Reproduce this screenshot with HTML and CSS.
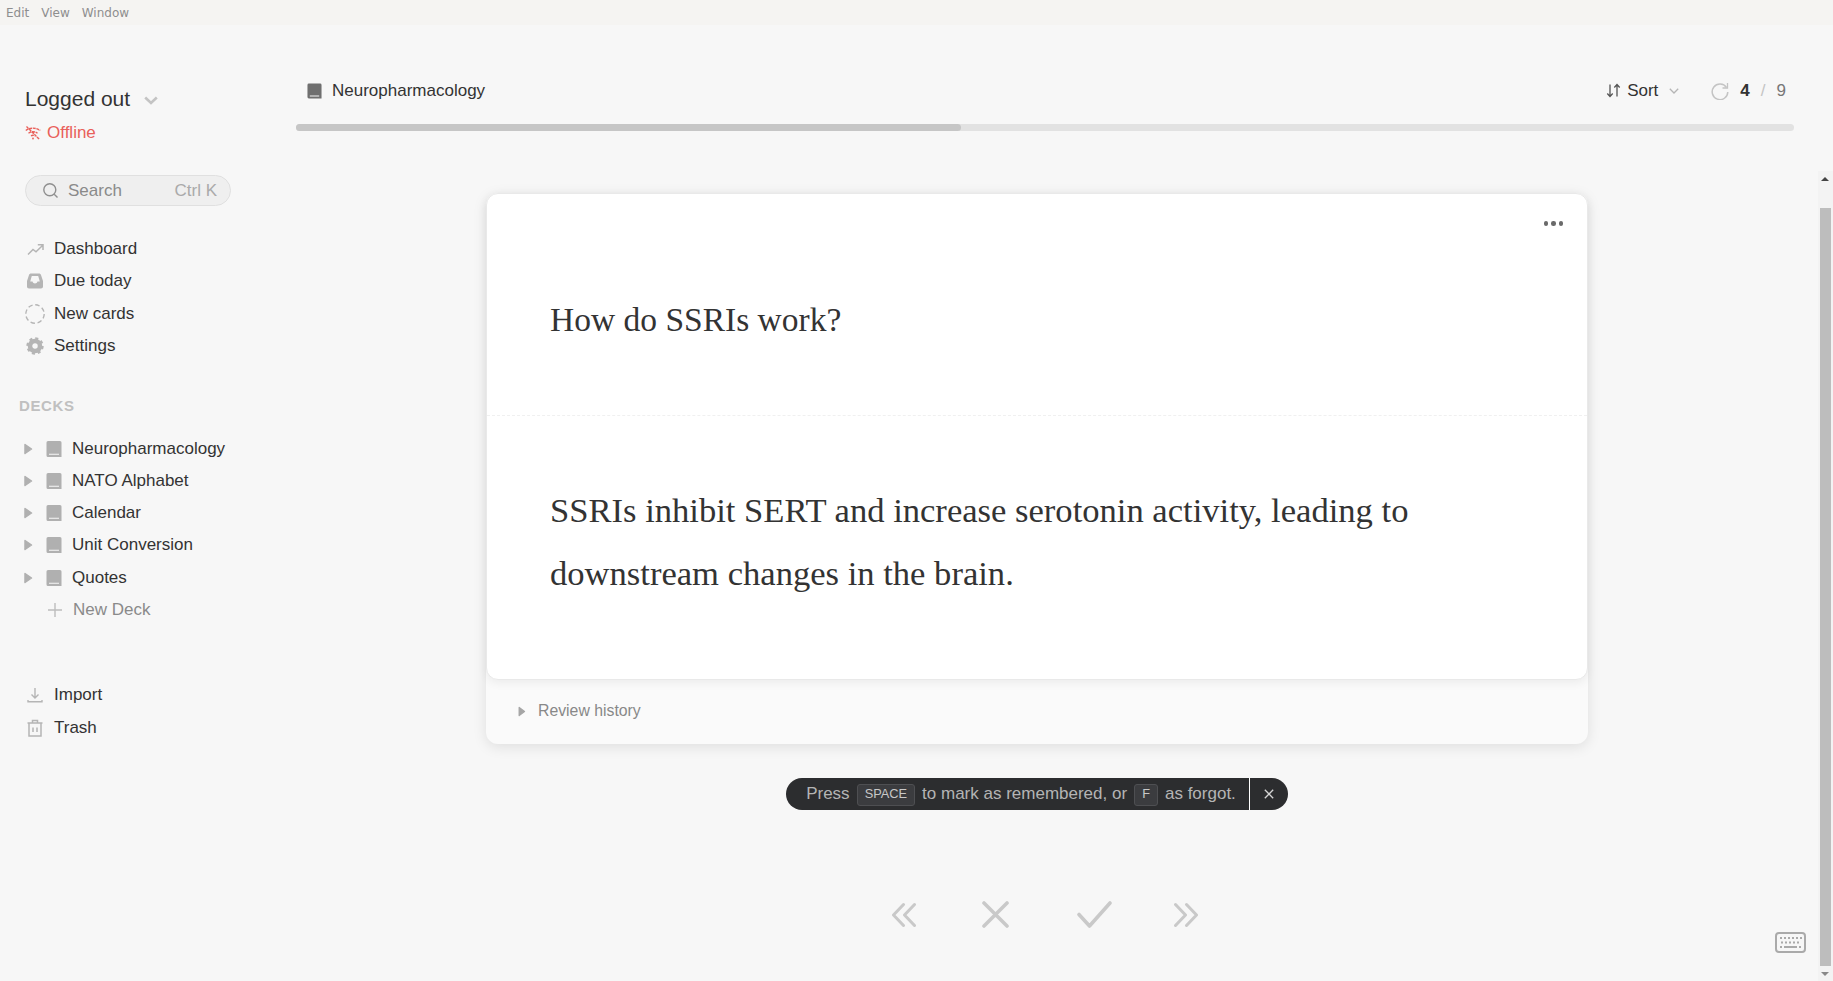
FILE: index.html
```html
<!DOCTYPE html>
<html lang="en">
<head>
    <meta charset="UTF-8">
    <title>Mochi</title>
    <link rel="stylesheet" href="styles.css">
</head>
<body>
    <div class="menubar">
        <span>Edit</span>
        <span>View</span>
        <span>Window</span>
    </div>

    <div class="app">
        <aside class="sidebar">
            <div class="account">Logged out
                <svg class="account-caret" width="14" height="9" viewBox="0 0 14 9"><path d="M1.200 1.500 7 7l5.800-5.500" fill="none" stroke="#c4c4c4" stroke-width="2.600"/></svg>
            </div>
            <div class="offline">
                <svg width="16" height="16" viewBox="0 0 16 16" fill="none" stroke="#e9605a" stroke-width="1.400" stroke-dasharray="3 .7"><path d="M.8 5.500C4.500 2.500 10.500 2.300 15.200 5.500M3.500 8.200C6 6.400 9.500 6.100 12.500 8.200M6 10.800c1.300-.8 2.700-.8 4 0M1.500 1.500l13 13"/><circle cx="8" cy="13.500" r=".9" fill="#e9605a" stroke="none"/></svg>
                Offline
            </div>
            <div class="search">
                <svg width="17" height="17" viewBox="0 0 17 17" fill="none" stroke="#8f8f8f" stroke-width="1.400"><circle cx="7.800" cy="7.800" r="6"/><path d="m12.200 12.200 3.300 3.300"/></svg>
                <span class="search-label">Search</span>
                <span class="search-key">Ctrl K</span>
            </div>

            <nav class="nav">
                <div class="nav-item">
                    <svg width="18" height="18" viewBox="0 0 18 18" fill="none" stroke="#b5b5b5" stroke-width="1.500"><path d="M2 14.500 7 9.500l3 2.300 6.800-6.500M11.800 4.800h5.200V10"/></svg>
                    Dashboard
                </div>
                <div class="nav-item">
                    <svg width="18" height="18" viewBox="0 0 18 18"><path d="M5 1.500h8c1 0 1.600.5 2 1.500L17 9v5.500c0 1.200-.8 2-2 2H3c-1.200 0-2-.8-2-2V9L3 3C3.400 2 4 1.500 5 1.500Zm.8 2.500L4.200 9.500h2.300c.3 1.300 1.200 2 2.500 2s2.200-.7 2.500-2h2.300L12.200 4Z" fill="#b5b5b5" fill-rule="evenodd"/></svg>
                    Due today
                </div>
                <div class="nav-item">
                    <svg width="20" height="20" viewBox="0 0 20 20" class="nav-wide"><circle cx="10" cy="10" r="9.200" fill="none" stroke="#b5b5b5" stroke-width="1.400" stroke-dasharray="4.500 2.720"/></svg>
                    New cards
                </div>
                <div class="nav-item">
                    <svg width="18" height="18" viewBox="0 0 18 18"><circle cx="9" cy="9" r="5" fill="none" stroke="#b5b5b5" stroke-width="4.500"/><circle cx="9" cy="9" r="7.500" fill="none" stroke="#b5b5b5" stroke-width="2.400" stroke-dasharray="3 2.890"/></svg>
                    Settings
                </div>
            </nav>

            <div class="section-title">DECKS</div>

            <div class="decks">
                <div class="deck">
                    <svg class="tri" width="9" height="12" viewBox="0 0 9 12"><path d="M1 1.500 7.500 6 1 10.500Z" fill="#b0b0b0" stroke="#b0b0b0" stroke-width="1.500" stroke-linejoin="round"/></svg>
                    <svg class="book" width="16" height="16" viewBox="0 0 16 16"><path d="M2 0h12a1.500 1.500 0 0 1 1.500 1.500V16H2a1.500 1.500 0 0 1-1.500-1.500v-13A1.500 1.500 0 0 1 2 0Zm1 12.800v1h10v-1Z" fill="#b0b0b0" fill-rule="evenodd"/></svg>
                    Neuropharmacology
                </div>
                <div class="deck">
                    <svg class="tri" width="9" height="12" viewBox="0 0 9 12"><path d="M1 1.500 7.500 6 1 10.500Z" fill="#b0b0b0" stroke="#b0b0b0" stroke-width="1.500" stroke-linejoin="round"/></svg>
                    <svg class="book" width="16" height="16" viewBox="0 0 16 16"><path d="M2 0h12a1.500 1.500 0 0 1 1.500 1.500V16H2a1.500 1.500 0 0 1-1.500-1.500v-13A1.500 1.500 0 0 1 2 0Zm1 12.800v1h10v-1Z" fill="#b0b0b0" fill-rule="evenodd"/></svg>
                    NATO Alphabet
                </div>
                <div class="deck">
                    <svg class="tri" width="9" height="12" viewBox="0 0 9 12"><path d="M1 1.500 7.500 6 1 10.500Z" fill="#b0b0b0" stroke="#b0b0b0" stroke-width="1.500" stroke-linejoin="round"/></svg>
                    <svg class="book" width="16" height="16" viewBox="0 0 16 16"><path d="M2 0h12a1.500 1.500 0 0 1 1.500 1.500V16H2a1.500 1.500 0 0 1-1.500-1.500v-13A1.500 1.500 0 0 1 2 0Zm1 12.800v1h10v-1Z" fill="#b0b0b0" fill-rule="evenodd"/></svg>
                    Calendar
                </div>
                <div class="deck">
                    <svg class="tri" width="9" height="12" viewBox="0 0 9 12"><path d="M1 1.500 7.500 6 1 10.500Z" fill="#b0b0b0" stroke="#b0b0b0" stroke-width="1.500" stroke-linejoin="round"/></svg>
                    <svg class="book" width="16" height="16" viewBox="0 0 16 16"><path d="M2 0h12a1.500 1.500 0 0 1 1.500 1.500V16H2a1.500 1.500 0 0 1-1.500-1.500v-13A1.500 1.500 0 0 1 2 0Zm1 12.800v1h10v-1Z" fill="#b0b0b0" fill-rule="evenodd"/></svg>
                    Unit Conversion
                </div>
                <div class="deck">
                    <svg class="tri" width="9" height="12" viewBox="0 0 9 12"><path d="M1 1.500 7.500 6 1 10.500Z" fill="#b0b0b0" stroke="#b0b0b0" stroke-width="1.500" stroke-linejoin="round"/></svg>
                    <svg class="book" width="16" height="16" viewBox="0 0 16 16"><path d="M2 0h12a1.500 1.500 0 0 1 1.500 1.500V16H2a1.500 1.500 0 0 1-1.500-1.500v-13A1.500 1.500 0 0 1 2 0Zm1 12.800v1h10v-1Z" fill="#b0b0b0" fill-rule="evenodd"/></svg>
                    Quotes
                </div>
                <div class="deck new-deck">
                    <svg class="book" width="16" height="16" viewBox="0 0 16 16"><path d="M8 1v14M1 8h14" stroke="#bdbdbd" stroke-width="1.400"/></svg>
                    New Deck
                </div>
            </div>

            <div class="nav nav-bottom">
                <div class="nav-item">
                    <svg width="18" height="18" viewBox="0 0 18 18" fill="none" stroke="#b5b5b5" stroke-width="1.400"><path d="M9 2v9.500M5.500 8.500 9 12l3.500-3.500M2 14v1.800h14V14"/></svg>
                    Import
                </div>
                <div class="nav-item">
                    <svg width="18" height="18" viewBox="0 0 18 18" fill="none" stroke="#b5b5b5" stroke-width="1.500"><path d="M1.500 4h15M3 4v13h12V4M6.500 4V1.500h5V4M7 8.500v4.500M11 8.500v4.500"/></svg>
                    Trash
                </div>
            </div>
        </aside>

        <main class="main">
            <header class="topbar">
                <div class="crumb">
                    <svg width="15" height="16" viewBox="0 0 16 16"><path d="M2 0h12a1.500 1.500 0 0 1 1.500 1.500V16H2a1.500 1.500 0 0 1-1.500-1.500v-13A1.500 1.500 0 0 1 2 0Zm1 12.800v1h10v-1Z" fill="#6f6f6f" fill-rule="evenodd"/></svg>
                    Neuropharmacology
                </div>
                <div class="sort">
                    <svg width="15" height="15" viewBox="0 0 15 15" fill="none" stroke="#555" stroke-width="1.300"><path d="M4 1.500v12M1.300 10.500 4 13.500l2.700-3M11 13.500v-12M8.300 4.500 11 1.500l2.700 3"/></svg>
                    Sort
                    <svg class="sort-caret" width="10" height="6" viewBox="0 0 10 6"><path d="M.8.800 5 5l4.200-4.200" fill="none" stroke="#b5b5b5" stroke-width="1.300"/></svg>
                </div>
                <svg class="redo" width="18" height="18" viewBox="0 0 18 18" fill="none" stroke="#c4c4c4" stroke-width="1.500"><path d="M15.500 5.500A7.800 7.800 0 1 0 16.800 10"/><path d="M16.500 1v5h-5" stroke-width="1.300"/></svg>
                <div class="count"><b>4</b><i>/</i><span>9</span></div>
            </header>
            <div class="progress"><div class="progress-fill" style="width: 44.4%"></div></div>

            <div class="stage">
                <div class="card-wrap">
                    <article class="card">
                        <button class="more"><span></span><span></span><span></span></button>
                        <section class="card-q">How do SSRIs work?</section>
                        <section class="card-a">SSRIs inhibit SERT and increase serotonin activity, leading to downstream changes in the brain.</section>
                    </article>
                    <div class="history">
                        <svg class="tri-dark" width="8" height="11" viewBox="0 0 8 11"><path d="M1.200 1.500 6.500 5.500l-5.300 4Z" fill="#a5a5a5" stroke="#a5a5a5" stroke-width="1.300" stroke-linejoin="round"/></svg>
                        Review history
                    </div>
                </div>

                <div class="hint">
                    <div class="hint-text">Press <kbd>SPACE</kbd> to mark as remembered, or <kbd>F</kbd> as forgot.</div>
                    <div class="hint-close">
                        <svg width="10" height="10" viewBox="0 0 10 10"><path d="M.8.800l8.400 8.400M9.200.800.800 9.200" stroke="#d5d5d5" stroke-width="1.300"/></svg>
                    </div>
                </div>

                <div class="actions">
                    <svg class="action-back" width="24" height="26" viewBox="0 0 24 26" fill="none" stroke="#c9c9c9" stroke-width="3" stroke-linecap="round" stroke-linejoin="round"><path d="M11.500 2.500 1.500 13l10 10.500M22.500 2.500 12.500 13l10 10.500"/></svg>
                    <svg width="27" height="27" viewBox="0 0 27 27" fill="none" stroke="#c9c9c9" stroke-width="3.600" stroke-linecap="round"><path d="m2 2 23 23M25 2 2 25"/></svg>
                    <svg class="action-check" width="35" height="27" viewBox="0 0 35 27" fill="none" stroke="#c9c9c9" stroke-width="3.600" stroke-linecap="round" stroke-linejoin="round"><path d="M2 13.500 12.500 25 33 2"/></svg>
                    <svg width="24" height="26" viewBox="0 0 24 26" fill="none" stroke="#c9c9c9" stroke-width="3" stroke-linecap="round" stroke-linejoin="round"><path d="M1.500 2.500 11.500 13l-10 10.500M12.500 2.500 22.500 13l-10 10.500"/></svg>
                </div>
            </div>
        </main>

        <div class="scrollbar">
            <div class="scroll-up"></div>
            <div class="scroll-track"><div class="scroll-thumb"></div></div>
            <div class="scroll-down"></div>
        </div>
    </div>

    <svg class="keyboard" width="31" height="21" viewBox="0 0 31 21"><rect x="1" y="1" width="29" height="19" rx="3" fill="none" stroke="#aaa" stroke-width="2"/><path d="M5 6h2M9 6h2M13 6h2M17 6h2M21 6h2M25 6h2M6 10.500h2M10 10.500h2M14 10.500h2M18 10.500h2M22 10.500h2M5 15h2M9 15h13M24 15h2" stroke="#aaa" stroke-width="2"/></svg>
</body>
</html>
```

FILE: styles.css
```css
/* Global reset */
* {
    margin: 0;
    padding: 0;
    box-sizing: border-box;
}

body {
    font-family: 'Liberation Sans', Arial, sans-serif;
    background: #f7f7f7;
    color: #333;
    height: 981px;
    overflow: hidden;
    display: flex;
    flex-direction: column;
}

/* Menu bar */
.menubar {
    height: 25px;
    flex: none;
    background: #f5f4f2;
    display: flex;
    align-items: center;
    gap: 12px;
    padding: 0 6px;
    font-family: 'DejaVu Sans', sans-serif;
    font-size: 12px;
    color: #8e8e8e;
}

.app {
    flex: 1;
    display: flex;
    min-height: 0;
}

/* Sidebar */
.sidebar {
    width: 296px;
    flex: none;
    padding: 61px 0 0 25px;
    font-size: 17px;
}

.account {
    font-size: 21px;
    line-height: 26px;
    color: #333;
    display: flex;
    align-items: center;
}

.account-caret {
    margin: 3px 0 0 14px;
}

.offline {
    display: flex;
    align-items: center;
    gap: 6px;
    margin-top: 10px;
    color: #e9605a;
    line-height: 22px;
}

.search {
    width: 206px;
    height: 31px;
    margin-top: 31px;
    border: 1px solid #e0e0e0;
    border-radius: 16px;
    background: #efefef;
    display: flex;
    align-items: center;
    padding: 0 13px 0 16px;
}

.search-label {
    margin-left: 9px;
    color: #8a8a8a;
}

.search-key {
    margin-left: auto;
    color: #aaa;
}

.nav {
    margin-top: 27px;
}

.nav-bottom {
    margin-top: 53px;
}

.nav-item {
    height: 32.300px;
    display: flex;
    align-items: center;
    gap: 10px;
    padding-left: 1px;
}

.nav-bottom .nav-item {
    height: 33px;
}

.nav-item svg {
    width: 18px;
    flex: none;
}

.nav-item .nav-wide {
    width: 20px;
    margin: 0 -1px;
}

.section-title {
    margin: 35px 0 0 -6px;
    font-size: 15px;
    font-weight: bold;
    letter-spacing: 0.6px;
    color: #c0c0c0;
    line-height: 18px;
}

.decks {
    margin-top: 17.500px;
}

.deck {
    height: 32.200px;
    display: flex;
    align-items: center;
}

.tri {
    flex: none;
    margin-left: -1px;
}

.book {
    margin: 0 10px 0 13px;
    flex: none;
}

.new-deck {
    color: #8a8a8a;
    padding-left: 23px;
}

.new-deck .book {
    margin: 0 10px 0 -1px;
}

/* Main area */
.main {
    flex: 1;
    min-width: 0;
    padding-right: 24px;
}

.topbar {
    height: 86px;
    padding: 45px 8px 0 11px;
    display: flex;
    align-items: center;
    font-size: 17px;
}

.crumb {
    display: flex;
    align-items: center;
    gap: 10px;
    margin-right: auto;
}

.sort {
    display: flex;
    align-items: center;
    gap: 6px;
    margin-right: 32px;
}

.sort-caret {
    margin-left: 5px;
}

.count {
    margin-left: 11px;
    display: flex;
    gap: 11px;
    color: #777;
    font-size: 17px;
}

.count b {
    color: #333;
}

.count i {
    color: #c4c4c4;
    font-style: normal;
}

.progress {
    height: 7px;
    margin-top: 13px;
    background: #e2e2e2;
    border-radius: 4px;
}

.progress-fill {
    height: 100%;
    background: #c6c6c6;
    border-radius: 4px;
}

.stage {
    display: flex;
    flex-direction: column;
    align-items: center;
    padding: 62px 16px 0 0;
}

/* Card */
.card-wrap {
    width: 1102px;
    background: #fafafa;
    border-radius: 12px;
    box-shadow: 0 3px 14px rgba(0, 0, 0, 0.1);
}

.card {
    position: relative;
    background: #fff;
    border-radius: 12px;
    border: 1px solid #e9e9e9;
    box-shadow: 0 3px 10px rgba(0, 0, 0, 0.06);
    font-family: 'Liberation Serif', serif;
    color: #333;
}

.card-q {
    height: 222px;
    padding: 99px 63px 0;
    font-size: 33.500px;
    line-height: 54px;
    border-bottom: 1px dashed #f0f0f0;
}

.card-a {
    height: 263px;
    padding: 63px 140px 0 63px;
    font-size: 34.600px;
    line-height: 63px;
}

.more {
    position: absolute;
    top: 27px;
    right: 24px;
    display: flex;
    gap: 3px;
    background: none;
    border: none;
}

.more span {
    width: 4.500px;
    height: 4.500px;
    border-radius: 50%;
    background: #6a6a6a;
}

.history {
    height: 64px;
    padding: 0 0 2px 32px;
    display: flex;
    align-items: center;
    gap: 12px;
    font-size: 15.800px;
    color: #888;
}

/* Hint */
.hint {
    margin-top: 34px;
    height: 32px;
    display: flex;
    border-radius: 16px;
    background: #2c2d2f;
    overflow: hidden;
    font-size: 17px;
    color: #b4b4b4;
}

.hint-text {
    padding: 0 13px 0 20px;
    line-height: 32px;
    white-space: nowrap;
}

.hint kbd {
    display: inline-block;
    font-family: 'Liberation Sans', sans-serif;
    font-size: 12.800px;
    height: 22px;
    line-height: 18px;
    margin: 0 2.300px;
    padding: 0 7px;
    vertical-align: 1px;
    border: 1px solid #4e4f52;
    border-radius: 3px;
    background: #3b3c3f;
    color: #c8c8c8;
}

.hint-close {
    width: 39px;
    display: flex;
    align-items: center;
    justify-content: center;
    border-left: 1px solid #fff;
}

/* Bottom actions */
.actions {
    margin: 91px 0 0 16px;
    display: flex;
    align-items: center;
    gap: 65px;
}

.action-back {
    margin-right: 1.500px;
}

.action-check {
    margin: 0 -3px 0 3px;
}

/* Fake scrollbar */
.scrollbar {
    width: 15px;
    flex: none;
    margin-top: 146px;
    display: flex;
    flex-direction: column;
    background: #f3f3f3;
}

.scroll-up,
.scroll-down {
    flex: none;
    position: relative;
}

.scroll-up {
    height: 18px;
}

.scroll-down {
    height: 15px;
}

.scroll-up::after,
.scroll-down::after {
    content: "";
    position: absolute;
    left: 3px;
    top: 6px;
    border-left: 4px solid transparent;
    border-right: 4px solid transparent;
}

.scroll-up::after {
    border-bottom: 4px solid #444;
}

.scroll-down::after {
    border-top: 4px solid #888;
}

.scroll-track {
    flex: 1;
    padding: 19px 2px 0;
}

.scroll-thumb {
    height: 100%;
    background: #bdbdbd;
}

.keyboard {
    position: absolute;
    left: 1775px;
    top: 932px;
}
```
